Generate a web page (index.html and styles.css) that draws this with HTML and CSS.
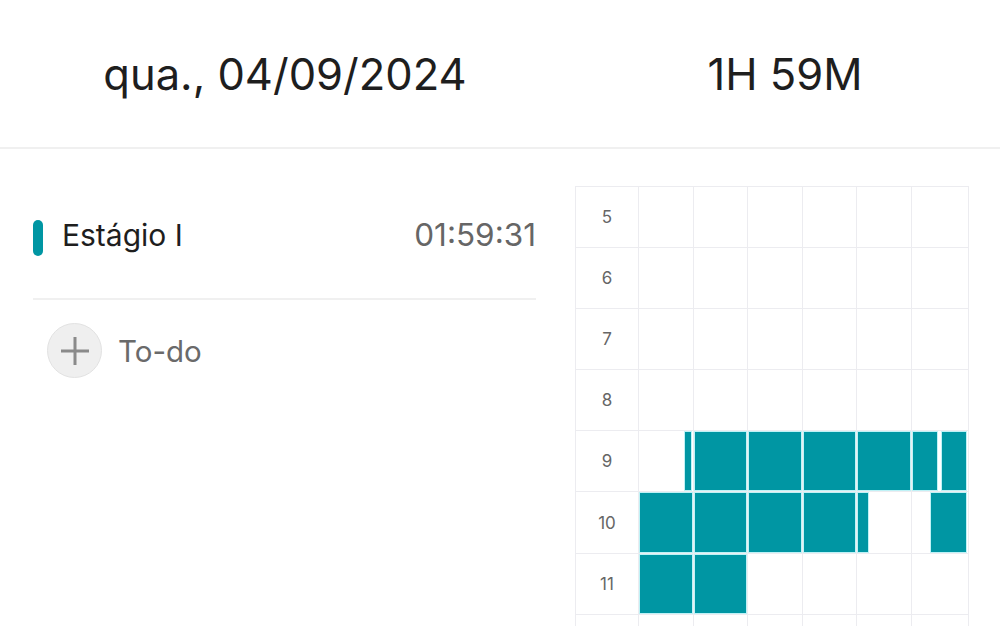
FILE: index.html
```html
<!DOCTYPE html>
<html lang="pt-BR">
<head>
    <meta charset="UTF-8">
    <meta name="viewport" content="width=device-width, initial-scale=1.0">
    <title>Timeline</title>
    <link rel="stylesheet" href="styles.css">
</head>
<body>

    <div class="header">
        <div class="header-cell">qua., 04/09/2024</div>
        <div class="header-cell">1H 59M</div>
    </div>

    <div class="main">
        <div class="tasks">
            <div class="task">
                <span class="task-bar"></span>
                <span class="task-name">Estágio I</span>
                <span class="task-time">01:59:31</span>
            </div>
            <div class="todo">
                <span class="todo-btn">
                    <svg width="30" height="30" viewBox="0 0 30 30">
                        <path d="M15 1 V29 M1 15 H29" stroke="#8a8a8a" stroke-width="3" fill="none"/>
                    </svg>
                </span>
                <span class="todo-label">To-do</span>
            </div>
        </div>

        <div class="timeline" id="timeline"></div>
    </div>

    <script>
        // filled parts of each hour, per column: [start, end] as fraction of the cell
        const fills = {
            9:  [[[0.85, 1]], [[0, 1]], [[0, 1]], [[0, 1]], [[0, 1]], [[0, 0.47], [0.53, 1]]],
            10: [[[0, 1]], [[0, 1]], [[0, 1]], [[0, 1]], [[0, 0.22]], [[0.33, 1]]],
            11: [[[0, 1]], [[0, 1]]]
        };

        function renderTimeline() {
            const timeline = document.getElementById("timeline");
            for (let hour = 5; hour <= 12; hour++) {
                const label = document.createElement("div");
                label.className = "hour";
                // last row is only partly on screen, its label falls below the fold
                label.textContent = hour < 12 ? hour : "";
                timeline.appendChild(label);

                for (let col = 0; col < 6; col++) {
                    const cell = document.createElement("div");
                    cell.className = "slot";
                    const parts = (fills[hour] && fills[hour][col]) || [];
                    let last = 0;
                    parts.forEach(part => {
                        const block = document.createElement("div");
                        block.className = "block";
                        block.style.marginLeft = ((part[0] - last) * 100) + "%";
                        block.style.width = ((part[1] - part[0]) * 100) + "%";
                        cell.appendChild(block);
                        last = part[1];
                    });
                    timeline.appendChild(cell);
                }
            }
        }

        renderTimeline();
    </script>

</body>
</html>
```

FILE: styles.css
```css
html, body {
    height: 626px;
    overflow: hidden;
}

body {
    font-family: Inter, "Noto Sans", sans-serif;
    background-color: #fff;
    color: #1e1e1e;
    margin: 0;
}

.header {
    display: flex;
    height: 147px;
    border-bottom: 2px solid #f0f0f0;
}

.header-cell {
    display: flex;
    align-items: center;
    justify-content: center;
    font-size: 43.5px;
    color: #1e1e1e;
}

.header-cell:first-child {
    width: 570px;
}

.header-cell:last-child {
    flex: 1;
}

.main {
    display: flex;
    align-items: flex-start;
}

.tasks {
    width: 503px;
    padding: 71px 34px 0 33px;
}

.task {
    display: flex;
    align-items: center;
    height: 36px;
    padding-bottom: 42px;
    border-bottom: 2px solid #f0f0f0;
}

.task-bar {
    width: 10px;
    height: 36px;
    border-radius: 5px;
    background: #0096a3;
    margin-right: 19px;
}

.task-name {
    flex: 1;
    font-size: 30px;
    color: #1e1e1e;
    margin-top: -7px;
}

.task-time {
    font-size: 31.5px;
    color: #666;
    margin-top: -7px;
}

.todo {
    display: flex;
    align-items: center;
    padding: 23px 0 0 14px;
}

.todo-btn {
    display: flex;
    align-items: center;
    justify-content: center;
    width: 53px;
    height: 53px;
    border-radius: 50%;
    background: #efefef;
    border: 1px solid #e2e2e2;
    margin-right: 16px;
}

.todo-label {
    font-size: 29.5px;
    color: #6a6a6a;
}

.timeline {
    display: grid;
    grid-template-columns: 63px repeat(5, 54.5px) 57px;
    grid-auto-rows: 61.1px;
    margin: 37px 0 0 5px;
    border-top: 1px solid #ececf0;
    border-left: 1px solid #ececf0;
}

.hour {
    display: flex;
    align-items: center;
    justify-content: center;
    font-size: 17px;
    color: #666;
    border-right: 1px solid #ececf0;
    border-bottom: 1px solid #ececf0;
}

.slot {
    display: flex;
    border-right: 1px solid #ececf0;
    border-bottom: 1px solid #ececf0;
}

.block {
    box-sizing: border-box;
    background: #0096a3;
    border: 1px solid #bff2f6;
}
```
